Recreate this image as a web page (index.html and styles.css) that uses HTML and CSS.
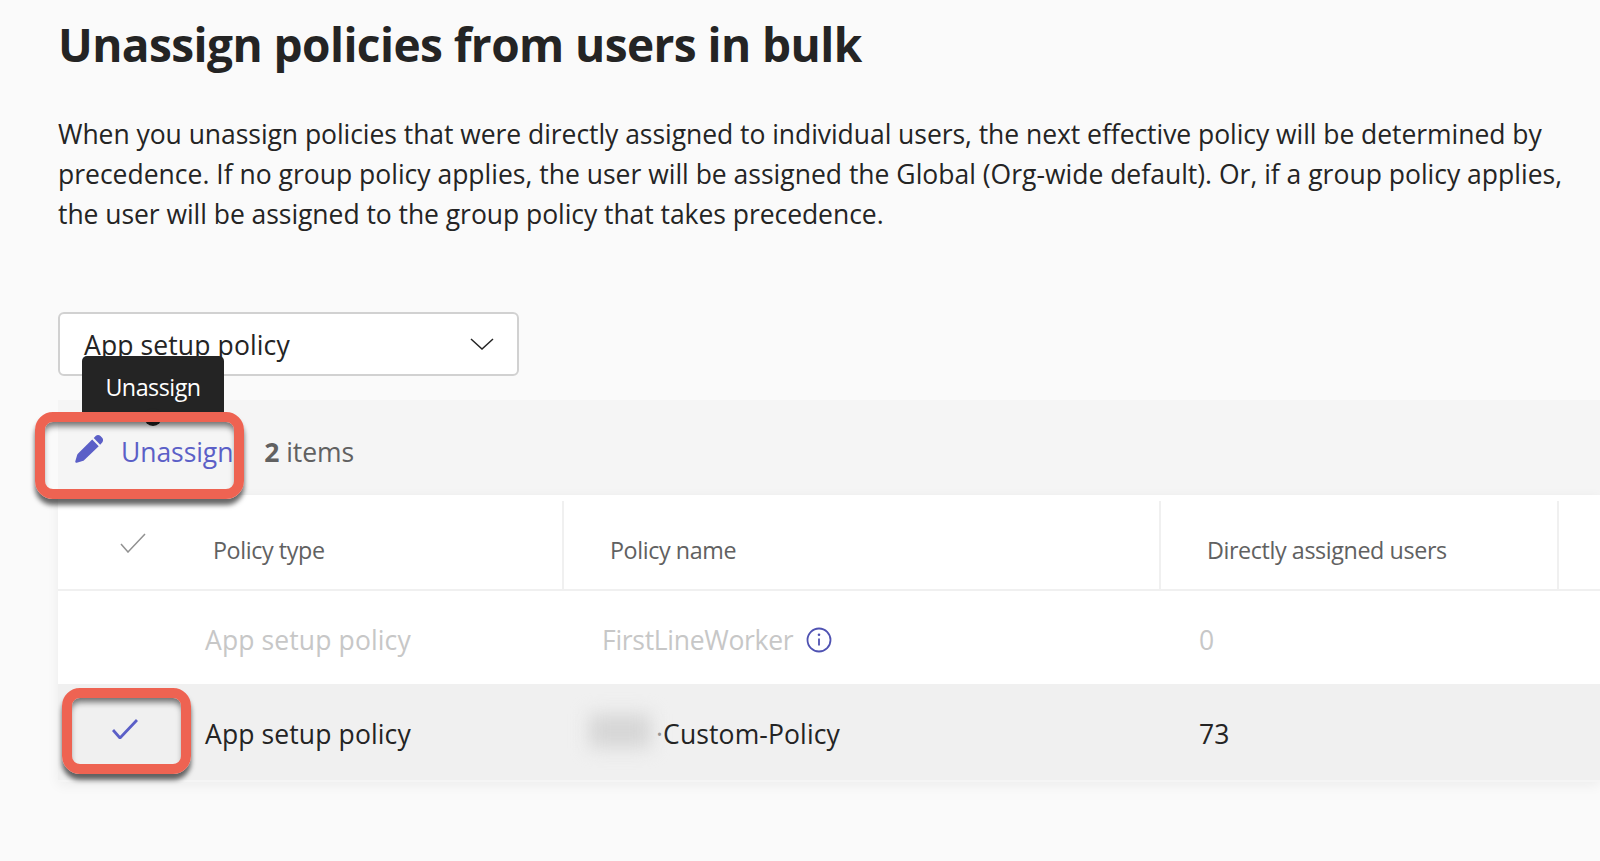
FILE: index.html
```html
<!DOCTYPE html>
<html lang="en">
<head>
<meta charset="utf-8">
<title>Unassign policies from users in bulk</title>
<link rel="stylesheet" href="styles.css">
</head>
<body>
<main class="page">
  <h1 class="title">Unassign policies from users in bulk</h1>
  <div class="intro">
    <p class="intro-line">When you unassign policies that were directly assigned to individual users, the next effective policy will be determined by</p>
    <p class="intro-line intro-line-wide">precedence. If no group policy applies, the user will be assigned the Global (Org-wide default). Or, if a group policy applies,</p>
    <p class="intro-line">the user will be assigned to the group policy that takes precedence.</p>
  </div>
  <div class="select">
    <span>App setup policy</span>
    <svg class="select-chevron" viewBox="0 0 24 12" aria-hidden="true"><path d="M1 1l11 10L23 1"/></svg>
  </div>
  <div class="toolbar">
    <button class="action" type="button">
      <svg class="pencil" viewBox="0 0 28 28" aria-hidden="true"><path d="M20.2 1.6c1.3-1 3.2-.9 4.4.3l1.6 1.7c1.2 1.3 1.2 3.2.1 4.5l-2 2.2-6.200-6.400zM16.600 5.400l6.300 6.400L9 25.100c-.5.500-1.100.8-1.700 1L1.700 27.800c-.9.200-1.700-.6-1.400-1.500L2 20.500c.2-.6.500-1.100 1-1.600z"/></svg>
      <span>Unassign</span>
    </button>
    <span class="count"><b>2</b> items</span>
  </div>
  <div class="table">
    <div class="row head">
      <div class="check"><svg class="tick tick-head" viewBox="0 0 26 20" aria-hidden="true"><path d="M1 11l7 8L25 1"/></svg></div>
      <div class="cell type">Policy type</div>
      <div class="cell name">Policy name</div>
      <div class="cell users">Directly assigned users</div>
      <div class="cell rest"></div>
    </div>
    <div class="row disabled">
      <div class="check"></div>
      <div class="cell type">App setup policy</div>
      <div class="cell name"><span class="worker">FirstLineWorker</span>
        <svg class="info" viewBox="0 0 26 26" aria-hidden="true"><circle cx="13" cy="13" r="11.500"/><path d="M13 11.500v7"/><circle class="info-dot" cx="13" cy="7.800" r="1.300"/></svg>
      </div>
      <div class="cell users">0</div>
      <div class="cell rest"></div>
    </div>
    <div class="row selected">
      <div class="check"><svg class="tick tick-on" viewBox="0 0 26 20" aria-hidden="true"><path d="M1 11l7 8L25 1"/></svg></div>
      <div class="cell type">App setup policy</div>
      <div class="cell name"><span class="redacted"></span><span class="dot">·</span>Custom-Policy</div>
      <div class="cell users">73</div>
      <div class="cell rest"></div>
    </div>
  </div>
</main>
<div class="tooltip">Unassign<span class="tooltip-tip"></span></div>
<div class="callout callout-action"></div>
<div class="callout callout-check"></div>
</body>
</html>
```
FILE: styles.css
```css
* { box-sizing: border-box; }
html, body { margin: 0; height: 100%; }
body {
  position: relative;
  height: 861px;
  overflow: hidden;
  background: #fafafa;
  color: #242424;
  font-family: "Open Sans", "Noto Sans", sans-serif;
}
.page { padding: 12px 0 0 58px; }
.title {
  margin: 0;
  font-size: 46px;
  line-height: 64px;
  font-weight: 700;
  letter-spacing: -0.58px;
  color: #242424;
}
.intro { margin-top: 39px; }
.intro-line {
  margin: 0;
  font-size: 26.500px;
  line-height: 39.800px;
  color: #242424;
  white-space: nowrap;
  letter-spacing: -0.05px;
}
.intro-line-wide { letter-spacing: 0; }
.select {
  margin-top: 78px;
  width: 461px;
  height: 64px;
  display: flex;
  align-items: center;
  justify-content: space-between;
  padding: 2px 23px 0 24px;
  background: #fff;
  border: 2px solid #d1d1d1;
  border-radius: 6px;
  font-size: 26.500px;
  letter-spacing: 0.12px;
  color: #242424;
}
.select-chevron { width: 24px; height: 12px; margin-top: -2px; fill: none; stroke: #242424; stroke-width: 1.500; }
.toolbar {
  margin-top: 24px;
  height: 95px;
  display: flex;
  align-items: center;
  gap: 31px;
  padding: 8px 0 0 17px;
  background: #f5f5f5;
}
.action {
  display: flex;
  align-items: center;
  gap: 17px;
  padding: 0;
  border: 0;
  background: none;
  font: inherit;
  font-size: 26.500px;
  letter-spacing: -0.07px;
  color: #5b5fc7;
}
.pencil { width: 29px; height: 29px; fill: #5b5fc7; margin-top: -6px; }
.count { font-size: 26.500px; letter-spacing: -0.07px; color: #616161; }
.count b { font-weight: 700; }
.table {
  background: #fff;
  box-shadow: 0 3px 12px rgba(0, 0, 0, 0.06);
  border-bottom: 2px solid #f5f5f5;
}
.row {
  display: grid;
  grid-template-columns: 147px 357px 597px 398px 1fr;
  align-items: stretch;
}
.check { display: flex; align-items: center; }
.cell { display: flex; align-items: center; font-size: 26.500px; letter-spacing: 0.12px; white-space: nowrap; }
.name { padding-left: 40px; }
.users { padding-left: 40px; }
.head {
  height: 96px;
  padding-top: 6px;
  border-bottom: 2px solid #f0f0f0;
  color: #616161;
}
.head .cell { font-size: 23.300px; letter-spacing: -0.4px; padding-top: 10px; }
.head .type { padding-left: 8px; }
.head .name { padding-left: 46px; border-left: 2px solid #f0f0f0; }
.head .users { padding-left: 46px; border-left: 2px solid #f0f0f0; }
.head .rest { border-left: 2px solid #f0f0f0; }
.disabled { height: 93px; color: #c7c7c7; }
.disabled .cell { padding-top: 4px; }
.worker { letter-spacing: -0.3px; }
.selected { height: 96px; background: #f0f0f0; color: #242424; }
.selected .cell { padding-top: 4px; }
.tick { fill: none; }
.tick-head { width: 26px; height: 20px; margin: -4px 0 0 62px; stroke: #919191; stroke-width: 1.500; }
.tick-on { width: 26px; height: 20px; margin: -6px 0 0 54px; stroke: #5b5fc7; stroke-width: 2.800; }
.info { width: 26px; height: 26px; margin-left: 13px; fill: none; stroke: #4f52b2; stroke-width: 1.800; }
.info-dot { fill: #4f52b2; stroke: none; }
.redacted {
  display: inline-block;
  width: 62px;
  height: 34px;
  margin: -6px 5px 0 -13px;
  background: #d6d6d6;
  filter: blur(9px);
}
.dot { color: #8a8a8a; }
.tooltip {
  position: absolute;
  left: 82px;
  top: 356px;
  width: 142px;
  height: 56px;
  display: flex;
  align-items: center;
  justify-content: center;
  padding-top: 6px;
  background: #242424;
  border-radius: 5px 5px 0 0;
  color: #fff;
  font-size: 23.300px;
  letter-spacing: -0.5px;
}
.tooltip-tip {
  position: absolute;
  left: 62px;
  bottom: -14px;
  width: 18px;
  height: 18px;
  border-radius: 50%;
  background: #242424;
}
.callout {
  position: absolute;
  border: 10px solid #ee6352;
  border-radius: 18px;
  box-shadow: 0 6px 5px rgba(0, 0, 0, 0.6), inset 0 6px 6px -2px rgba(0, 0, 0, 0.55);
}
.callout-action { left: 35px; top: 412px; width: 209px; height: 87px; }
.callout-check { left: 62px; top: 688px; width: 129px; height: 86px; }
```
